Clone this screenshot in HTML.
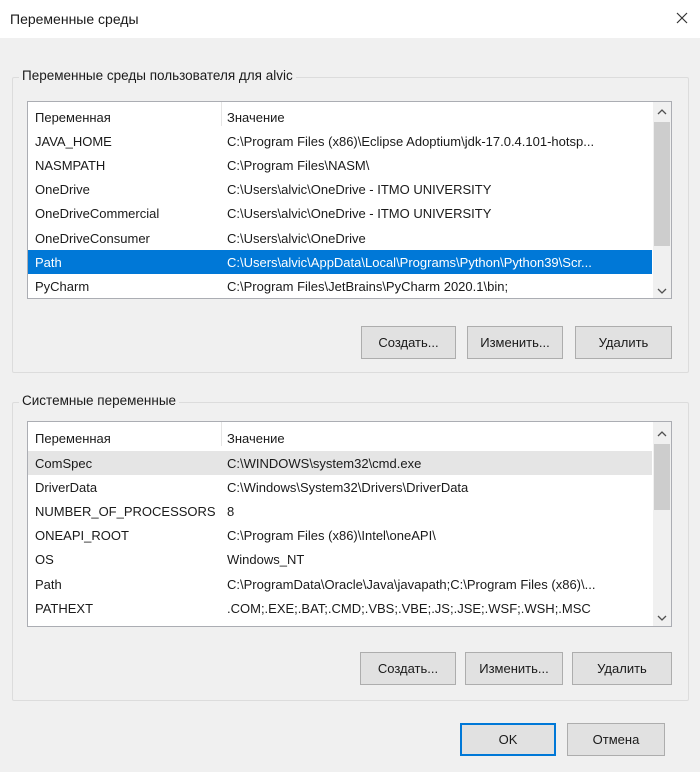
<!DOCTYPE html>
<html><head><meta charset="utf-8"><style>
*{margin:0;padding:0;box-sizing:border-box}
body{width:700px;height:772px;background:#f0f0f0;font-family:"Liberation Sans","DejaVu Sans",sans-serif;font-size:13px;color:#1a1a1a;position:relative;overflow:hidden}
.abs{position:absolute}
.title{left:0;top:0;width:700px;height:38px;background:#fff}
.title span{position:absolute;left:10px;top:11px;font-size:14px}
.group{border:1px solid #dcdcdc;border-radius:2px}
.legend{background:#f0f0f0;padding:0 3px;font-size:13.5px}
.list{background:#fff;border:1px solid #abadb3;overflow:hidden}
.row{position:absolute;left:0;height:24px;width:624px;white-space:nowrap}
.row .a{position:absolute;left:7px;top:5px}
.row .b{position:absolute;left:199px;top:5px;width:422px;overflow:hidden}
.sel{background:#0078d7;color:#fff}
.hov{background:#e5e5e5}
.sb{position:absolute;right:0;top:0;width:18px;height:100%;background:#f0f0f0}
.sb .th{position:absolute;left:1px;width:16px;background:#cdcdcd}
.sb svg{position:absolute;left:4px}
.sep{position:absolute;left:193px;top:0;width:1px;height:24px;background:#e5e5e5}
.btn{position:absolute;height:33px;background:#e1e1e1;border:1px solid #adadad;text-align:center;line-height:31px;font-size:13px}
</style></head><body>
<div class="abs title"><span>Переменные среды</span>
<svg style="position:absolute;left:676px;top:12px" width="12" height="12" viewBox="0 0 12 12"><path d="M1 1L11 11M11 1L1 11" stroke="#333" stroke-width="1.2"/></svg></div>

<div class="abs group" style="left:12px;top:77px;width:677px;height:296px"></div>
<div class="abs legend" style="left:19px;top:68px">Переменные среды пользователя для alvic</div>
<div class="abs list" style="left:27px;top:101px;width:645px;height:198px">
 <div class="sep"></div>
 <div class="row" style="top:3px"><span class="a">Переменная</span><span class="b">Значение</span></div>
 <div class="row" style="top:27px"><span class="a">JAVA_HOME</span><span class="b">C:\Program Files (x86)\Eclipse Adoptium\jdk-17.0.4.101-hotsp...</span></div>
 <div class="row" style="top:51px"><span class="a">NASMPATH</span><span class="b">C:\Program Files\NASM\</span></div>
 <div class="row" style="top:75px"><span class="a">OneDrive</span><span class="b">C:\Users\alvic\OneDrive - ITMO UNIVERSITY</span></div>
 <div class="row" style="top:99px"><span class="a">OneDriveCommercial</span><span class="b">C:\Users\alvic\OneDrive - ITMO UNIVERSITY</span></div>
 <div class="row" style="top:124px"><span class="a">OneDriveConsumer</span><span class="b">C:\Users\alvic\OneDrive</span></div>
 <div class="row sel" style="top:148px"><span class="a">Path</span><span class="b">C:\Users\alvic\AppData\Local\Programs\Python\Python39\Scr...</span></div>
 <div class="row" style="top:172px"><span class="a">PyCharm</span><span class="b">C:\Program Files\JetBrains\PyCharm 2020.1\bin;</span></div>
 <div class="row" style="top:192px"><span class="a">TEMP</span><span class="b">C:\Users\alvic\AppData\Local\Temp</span></div>
 <div class="sb"><svg style="top:7px" width="10" height="6" viewBox="0 0 10 6"><path d="M1 5L5 1L9 5" stroke="#505050" stroke-width="1.3" fill="none"/></svg><div class="th" style="top:20px;height:124px"></div><svg style="top:186px" width="10" height="6" viewBox="0 0 10 6"><path d="M1 1L5 5L9 1" stroke="#505050" stroke-width="1.3" fill="none"/></svg></div>
</div>
<div class="btn" style="left:361px;top:326px;width:95px">Создать...</div>
<div class="btn" style="left:467px;top:326px;width:96px">Изменить...</div>
<div class="btn" style="left:575px;top:326px;width:97px">Удалить</div>

<div class="abs group" style="left:12px;top:402px;width:677px;height:299px"></div>
<div class="abs legend" style="left:19px;top:393px">Системные переменные</div>
<div class="abs list" style="left:27px;top:421px;width:645px;height:206px">
 <div class="sep"></div>
 <div class="row" style="top:4px"><span class="a">Переменная</span><span class="b">Значение</span></div>
 <div class="row hov" style="top:29px"><span class="a">ComSpec</span><span class="b">C:\WINDOWS\system32\cmd.exe</span></div>
 <div class="row" style="top:53px"><span class="a">DriverData</span><span class="b">C:\Windows\System32\Drivers\DriverData</span></div>
 <div class="row" style="top:77px"><span class="a">NUMBER_OF_PROCESSORS</span><span class="b">8</span></div>
 <div class="row" style="top:101px"><span class="a">ONEAPI_ROOT</span><span class="b">C:\Program Files (x86)\Intel\oneAPI\</span></div>
 <div class="row" style="top:125px"><span class="a">OS</span><span class="b">Windows_NT</span></div>
 <div class="row" style="top:150px"><span class="a">Path</span><span class="b">C:\ProgramData\Oracle\Java\javapath;C:\Program Files (x86)\...</span></div>
 <div class="row" style="top:174px"><span class="a">PATHEXT</span><span class="b">.COM;.EXE;.BAT;.CMD;.VBS;.VBE;.JS;.JSE;.WSF;.WSH;.MSC</span></div>
 <div class="row" style="top:196px"><span class="a">PROCESSOR_ARCHITECTU</span><span class="b">AMD64</span></div>
 <div class="sb"><svg style="top:9px" width="10" height="6" viewBox="0 0 10 6"><path d="M1 5L5 1L9 5" stroke="#505050" stroke-width="1.3" fill="none"/></svg><div class="th" style="top:22px;height:66px"></div><svg style="top:193px" width="10" height="6" viewBox="0 0 10 6"><path d="M1 1L5 5L9 1" stroke="#505050" stroke-width="1.3" fill="none"/></svg></div>
</div>
<div class="btn" style="left:360px;top:652px;width:96px">Создать...</div>
<div class="btn" style="left:465px;top:652px;width:98px">Изменить...</div>
<div class="btn" style="left:572px;top:652px;width:100px">Удалить</div>

<div class="btn" style="left:460px;top:723px;width:96px;border:2px solid #0078d7;line-height:29px">OK</div>
<div class="btn" style="left:567px;top:723px;width:98px">Отмена</div>
</body></html>
